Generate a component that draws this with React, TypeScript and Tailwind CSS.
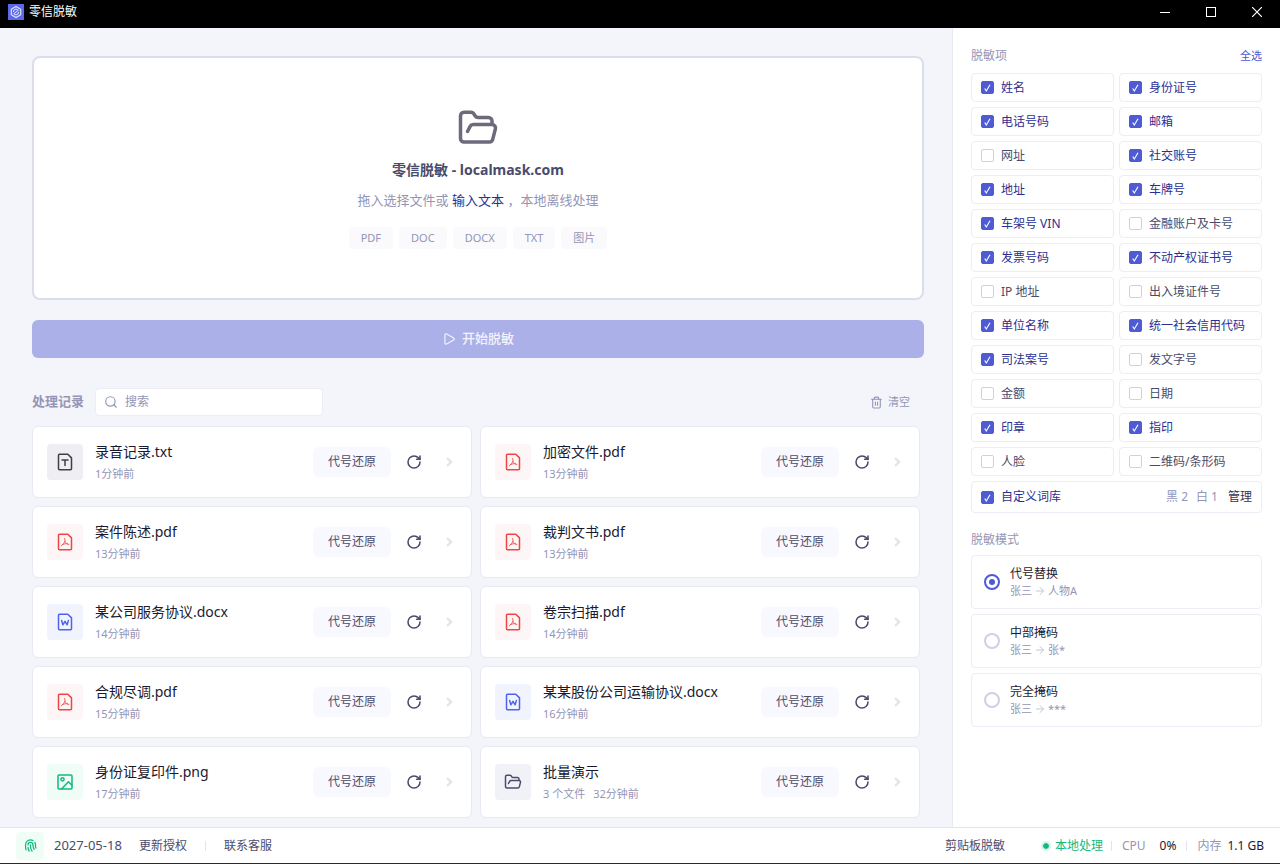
import React, { useState } from "react";
import { ArrowRight, ChevronRight, FolderOpen, Play, RotateCw, Search, Trash2 } from "lucide-react";
import { TbFingerprint } from "react-icons/tb";

type FileKind = "txt" | "pdf" | "docx" | "png" | "folder";

type RecordItem = {
  name: string;
  kind: FileKind;
  time: string;
  count?: string;
};

const RECORDS: RecordItem[] = [
  { name: "录音记录.txt", kind: "txt", time: "1分钟前" },
  { name: "加密文件.pdf", kind: "pdf", time: "13分钟前" },
  { name: "案件陈述.pdf", kind: "pdf", time: "13分钟前" },
  { name: "裁判文书.pdf", kind: "pdf", time: "13分钟前" },
  { name: "某公司服务协议.docx", kind: "docx", time: "14分钟前" },
  { name: "卷宗扫描.pdf", kind: "pdf", time: "14分钟前" },
  { name: "合规尽调.pdf", kind: "pdf", time: "15分钟前" },
  { name: "某某股份公司运输协议.docx", kind: "docx", time: "16分钟前" },
  { name: "身份证复印件.png", kind: "png", time: "17分钟前" },
  { name: "批量演示", kind: "folder", time: "32分钟前", count: "3 个文件" },
];

const ITEMS: [string, boolean][] = [
  ["姓名", true],
  ["身份证号", true],
  ["电话号码", true],
  ["邮箱", true],
  ["网址", false],
  ["社交账号", true],
  ["地址", true],
  ["车牌号", true],
  ["车架号 VIN", true],
  ["金融账户及卡号", false],
  ["发票号码", true],
  ["不动产权证书号", true],
  ["IP 地址", false],
  ["出入境证件号", false],
  ["单位名称", true],
  ["统一社会信用代码", true],
  ["司法案号", true],
  ["发文字号", false],
  ["金额", false],
  ["日期", false],
  ["印章", true],
  ["指印", true],
  ["人脸", false],
  ["二维码/条形码", false],
];

const MODES = [
  { title: "代号替换", result: "人物A" },
  { title: "中部掩码", result: "张*" },
  { title: "完全掩码", result: "***" },
];

const FORMATS = ["PDF", "DOC", "DOCX", "TXT", "图片"];

const KIND_STYLE: Record<FileKind, string> = {
  txt: "bg-[#eeeef3] text-[#3f3f46]",
  pdf: "bg-[#fef6f6] text-[#ef4444]",
  docx: "bg-[#f1f4ff] text-[#4f63ea]",
  png: "bg-[#f0fdf7] text-[#10b981]",
  folder: "bg-[#f1f2f8] text-[#4a4b6a]",
};

const FileIcon = ({ kind }: { kind: FileKind }) => {
  if (kind === "folder") return <FolderOpen size={18} />;
  return (
    <svg
      width="20"
      height="20"
      viewBox="0 0 20 20"
      fill="none"
      stroke="currentColor"
      strokeWidth="1.5"
      strokeLinecap="round"
      strokeLinejoin="round"
    >
      {kind === "png" ? (
        <>
          <rect x="3" y="3" width="14" height="14" rx="1" />
          <circle cx="7.5" cy="7.3" r="1.6" />
          <path d="M6.5 17l7-7.2 3.5 3.4" />
        </>
      ) : (
        <path d="M4.5 2.2h8.3l3.7 3.7v10.9a1 1 0 0 1-1 1h-11a1 1 0 0 1-1-1V3.2a1 1 0 0 1 1-1z" />
      )}
      {kind === "txt" && <path d="M7 8h6M10 8v5.5" />}
      {kind === "docx" && <path d="M6.6 8.4l1.3 4.4L10 9.4l2.1 3.4 1.3-4.4" />}
      {kind === "pdf" && (
        <path
          strokeWidth="1"
          strokeOpacity="0.8"
          d="M9.6 6.4c.9 2.2.4 4.6-3.4 7.6M9.9 9.2c.8 2 2 2.9 4 3.3M7.4 12.6c2-.9 3.6-1.2 5.4-.7"
        />
      )}
    </svg>
  );
};

const Check = ({ label, checked, onChange }: { label: React.ReactNode; checked: boolean; onChange: () => void }) => (
  <label className="flex items-center gap-[7px] text-xs cursor-pointer">
    <span className="grid shrink-0">
      <input
        type="checkbox"
        checked={checked}
        onChange={onChange}
        className="peer col-start-1 row-start-1 appearance-none w-[13px] h-[13px] rounded-[2px] border border-[#cfd0e3] bg-white checked:bg-[#4f5bd5] checked:border-[#4f5bd5]"
      />
      <svg
        viewBox="0 0 13 13"
        className="col-start-1 row-start-1 w-[13px] h-[13px] pointer-events-none invisible peer-checked:visible"
        fill="none"
        stroke="white"
        strokeWidth="1.1"
      >
        <path d="M3.7 7.5l1.6 2.5L9 3.7" />
      </svg>
    </span>
    <span className={checked ? "text-[#2b2f91]" : "text-[#4a4b6a]"}>{label}</span>
  </label>
);

const RecordCard = ({ item }: { item: RecordItem }) => (
  <div className="flex items-center h-[72px] px-3.5 bg-white border border-[#e8e9f3] rounded-md">
    <div className={`flex items-center justify-center w-9 h-9 shrink-0 rounded ${KIND_STYLE[item.kind]}`}>
      <FileIcon kind={item.kind} />
    </div>
    <div className="ml-3 flex-1 min-w-0">
      <div className="text-sm leading-6 text-[#1a1a2e] truncate">{item.name}</div>
      <div className="flex gap-2 text-[11px] leading-5 text-[#9495b5]">
        {item.count && <span>{item.count}</span>}
        <span>{item.time}</span>
      </div>
    </div>
    <button className="h-[30px] px-[15px] rounded-md bg-[#f8f9fe] text-xs text-[#4a4b6a]">代号还原</button>
    <button aria-label="重新处理" className="ml-2 w-[30px] h-[30px] flex items-center justify-center text-[#4a4b6a]">
      <RotateCw size={16} strokeWidth={2.3} />
    </button>
    <button aria-label="详情" className="ml-3 text-[#e2e3ec]">
      <ChevronRight size={16} strokeWidth={3.5} strokeLinecap="butt" strokeLinejoin="miter" />
    </button>
  </div>
);

const TitleBar = () => (
  <header className="flex items-center h-7 pb-1 bg-black text-white">
    <svg width="16" height="16" viewBox="0 0 16 16" className="ml-2" fill="none" stroke="white">
      <rect width="16" height="16" fill="#5b68e8" stroke="none" />
      <path d="M8 2.5l4.7 2.7v5.5L8 13.5l-4.7-2.8V5.2z" strokeWidth="1.1" strokeOpacity="0.85" />
      <path d="M10.4 6.2L8 5 5.6 6.4v1.5M5.7 9.7L8 11l2.4-1.4V8.1M5.8 9.6l4.5-3.2" strokeWidth="1" strokeOpacity="0.85" />
    </svg>
    <span className="ml-[5px] flex-1 text-xs">零信脱敏</span>
    <button aria-label="最小化" className="w-[46px] h-6 flex items-center justify-center">
      <svg width="10" height="10" stroke="currentColor" shapeRendering="crispEdges"><path d="M0 5.5h10" /></svg>
    </button>
    <button aria-label="最大化" className="w-[46px] h-6 flex items-center justify-center">
      <svg width="10" height="10" fill="none" stroke="currentColor"><rect x="0.5" y="0.5" width="9" height="9" /></svg>
    </button>
    <button aria-label="关闭" className="w-[46px] h-6 flex items-center justify-center">
      <svg width="10" height="10" stroke="currentColor" strokeWidth="1.2"><path d="M0 0l10 10M10 0L0 10" /></svg>
    </button>
  </header>
);

const Sidebar = () => {
  const [checks, setChecks] = useState(ITEMS.map(([, on]) => on));
  const [custom, setCustom] = useState(true);
  const [mode, setMode] = useState(0);

  return (
    <aside className="w-[328px] shrink-0 px-[18px] pt-[18px] pb-4 bg-white border-l border-[#e8e9f3]">
      <div className="flex items-center justify-between h-5 mb-[7px]">
        <h2 className="text-xs text-[#9495b5]">脱敏项</h2>
        <button className="text-[11px] text-[#4f5bd5]" onClick={() => setChecks(checks.map(() => true))}>
          全选
        </button>
      </div>
      <div className="grid grid-cols-2 gap-[5px]">
        {ITEMS.map(([label], i) => (
          <div key={label} className="flex items-center h-[29px] px-[9px] border border-[#ecedf5] rounded">
            <Check
              label={label}
              checked={checks[i]}
              onChange={() => setChecks(checks.map((c, n) => (n === i ? !c : c)))}
            />
          </div>
        ))}
        <div className="col-span-2 flex items-center h-8 px-[9px] border border-[#ecedf5] rounded text-xs">
          <Check label="自定义词库" checked={custom} onChange={() => setCustom(!custom)} />
          <span className="ml-auto text-[#9495b5]">黑 2</span>
          <span className="ml-2 text-[#9495b5]">白 1</span>
          <button className="ml-2.5 text-[#33344f]">管理</button>
        </div>
      </div>

      <h2 className="mt-[17px] mb-[5px] text-xs leading-5 text-[#9495b5]">脱敏模式</h2>
      <div className="flex flex-col gap-[5px]">
        {MODES.map((m, i) => (
          <label key={m.title} className="flex items-center gap-2.5 h-[54px] px-3 border border-[#ecedf5] rounded cursor-pointer">
            <input
              type="radio"
              name="mode"
              checked={mode === i}
              onChange={() => setMode(i)}
              className="appearance-none w-4 h-4 shrink-0 rounded-full border-2 border-[#cfd0e3] p-[3px] bg-clip-content checked:border-[#4f5bd5] checked:bg-[#4f5bd5]"
            />
            <span className="flex flex-col">
              <span className="text-xs leading-[18px] text-[#1a1a2e]">{m.title}</span>
              <span className="flex items-center gap-0.5 text-[11px] leading-4 text-[#9495b5]">
                张三
                <ArrowRight size={12} className="text-[#c3c4d9]" />
                {m.result}
              </span>
            </span>
          </label>
        ))}
      </div>
    </aside>
  );
};

const StatusBar = () => (
  <footer className="flex items-center h-[37px] px-4 bg-white border-t border-t-[#e2e3ee] border-b border-b-[#2b2b2b] text-xs text-[#4a4b6a]">
    <div className="flex items-center justify-center w-7 h-7 rounded bg-[#f0fdf7] text-[#10b981]">
      <TbFingerprint size={15} />
    </div>
    <span className="ml-2.5 text-[13px]">2027-05-18</span>
    <button className="ml-[17px]">更新授权</button>
    <span className="mx-[18px] w-px h-2.5 bg-[#e2e3ee]" />
    <button>联系客服</button>
    <button className="ml-auto mr-9">剪贴板脱敏</button>
    <span className="w-2.5 h-2.5 rounded-full border-2 border-[#d5f5e9] bg-[#10b981] bg-clip-padding" />
    <span className="ml-1 text-[#10b981]">本地处理</span>
    <span className="mx-2 w-px h-2.5 bg-[#e2e3ee]" />
    <span className="ml-0.5 text-[#9495b5]">CPU</span>
    <span className="ml-3.5 text-[#1a1a2e]">0%</span>
    <span className="mx-2.5 w-px h-2.5 bg-[#e2e3ee]" />
    <span className="text-[#9495b5]">内存</span>
    <span className="ml-1.5 text-[#1a1a2e]">1.1 GB</span>
  </footer>
);

const App: React.FC = () => {
  return (
    <div className="flex flex-col min-h-screen bg-[#f4f5fa] font-['Noto_Sans','Noto_Sans_CJK_SC',sans-serif]">
      <TitleBar />
      <div className="flex flex-1">
        <main className="flex-1 min-w-0 pl-8 pr-7 pt-7 pb-[9px]">
          <section className="flex flex-col items-center justify-center h-[244px] bg-white border-2 border-[#dcddec] rounded-lg">
            <FolderOpen size={42} className="text-[#6b6b7b]" />
            <h1 className="mt-[11px] text-sm leading-5 font-bold text-[#4a4b6a]">零信脱敏 - localmask.com</h1>
            <p className="mt-2.5 text-[13px] leading-5 text-[#9495b5]">
              拖入选择文件或 <button className="text-[#2b2f91]">输入文本</button> ，本地离线处理
            </p>
            <div className="flex gap-1.5 mt-[17px]">
              {FORMATS.map((f) => (
                <span key={f} className="px-3 text-[11px] leading-[22px] rounded-sm bg-[#fafafd] text-[#9495b5]">
                  {f}
                </span>
              ))}
            </div>
          </section>

          <button className="flex items-center justify-center gap-1.5 w-full h-[38px] mt-5 rounded-md bg-[#abb0e8] text-[13px] font-medium text-white/85">
            <Play size={14} />
            开始脱敏
          </button>

          <div className="flex items-center h-7 mt-[30px] mb-2.5">
            <h2 className="text-[13px] font-semibold text-[#9495b5]">处理记录</h2>
            <div className="flex items-center ml-[11px] w-[228px] h-7 px-2 bg-white border border-[#ecedf5] rounded">
              <Search size={14} className="text-[#9495b5]" />
              <input
                type="text"
                aria-label="搜索"
                placeholder="搜索"
                className="ml-[7px] flex-1 min-w-0 text-xs outline-none placeholder:text-[#9495b5]"
              />
            </div>
            <button className="flex items-center gap-[5px] ml-auto mr-3.5 text-[11px] text-[#9495b5]">
              <Trash2 size={13} />
              清空
            </button>
          </div>

          <div className="grid grid-cols-2 gap-2 mr-1">
            {RECORDS.map((r) => (
              <RecordCard key={r.name} item={r} />
            ))}
          </div>
        </main>
        <Sidebar />
      </div>
      <StatusBar />
    </div>
  );
};

export default App;
